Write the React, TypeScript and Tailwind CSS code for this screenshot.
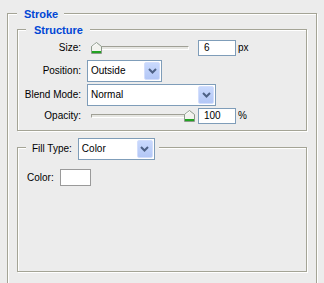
import React from "react";

const GRAY = "border-[#a4a496]";

function Chevron() {
  return (
    <svg width="9" height="6" viewBox="0 0 9 6">
      <polyline points="1,1 4.5,4.5 8,1" fill="none" stroke="#4d6185" strokeWidth="2" />
    </svg>
  );
}

function Select({ value, w }: { value: string; w: string }) {
  return (
    <div className={`flex h-[22px] items-stretch border border-[#7f9db9] bg-white ${w}`}>
      <span className="flex flex-1 items-center pl-[3px] text-[10px] text-black">{value}</span>
      <span className="m-[1px] flex w-[16px] items-center justify-center rounded-[2px] border border-[#d3defc] bg-gradient-to-b from-[#c9d9fd] to-[#b3c7f6]">
        <Chevron />
      </span>
    </div>
  );
}

function Input({ value }: { value: string }) {
  return (
    <div className="flex h-[16px] w-[38px] items-center border border-[#7f9db9] bg-white pl-[5px] text-[10px] text-black">
      {value}
    </div>
  );
}

function Thumb() {
  return (
    <svg width="11" height="12" viewBox="0 0 11 12">
      <path d="M0.5 11.5 V4.5 L5.5 0.5 L10.5 4.5 V11.5 Z" fill="#f3f3ef" stroke="#8c9a8a" />
      <rect x="1" y="9" width="9" height="2" fill="#22a322" />
      <path d="M1.5 4.8 L5.5 1.6" stroke="#ffffff" />
    </svg>
  );
}

function Slider({ pos }: { pos: "min" | "max" }) {
  return (
    <div className="relative h-[12px] w-[104px]">
      <div className="absolute left-0 top-[4px] h-[4px] w-[98px] border-t border-l border-[#a0a096] border-b border-b-white border-r border-r-white bg-[#e6e6e2]" />
      <div className={`absolute top-0 ${pos === "min" ? "left-0" : "left-[93px]"}`}>
        <Thumb />
      </div>
    </div>
  );
}

function Label({ children }: { children: React.ReactNode }) {
  return <div className="w-[63px] shrink-0 text-right text-[10px] text-black">{children}</div>;
}

export default function App() {
  return (
    <div className="h-[283px] w-[324px] overflow-hidden bg-[#ececec] pl-[7px] pt-[13px] font-['Liberation_Sans',Arial,sans-serif] leading-none">
      <div className={`relative h-[300px] w-[310px] border ${GRAY} px-[9px] pt-[15px] shadow-[inset_1px_1px_0_#fff,1px_1px_0_#fff]`}>
        <div className="absolute left-[9px] top-[-6px] bg-[#ececec] pl-[7px] pr-[6px] text-[11px] font-bold leading-[13px] text-[#0046d5]">
          Stroke
        </div>

        {/* Structure */}
        <div className={`relative w-[290px] border ${GRAY} pt-[10px] pb-[6px] shadow-[inset_1px_1px_0_#fff,1px_1px_0_#fff]`}>
          <div className="absolute left-[8px] top-[-6px] bg-[#ececec] pl-[8px] pr-[7px] text-[11px] font-bold leading-[13px] text-[#0046d5]">
            Structure
          </div>
          <div className="flex h-[16px] items-center">
            <Label>Size:</Label>
            <div className="ml-[10px]">
              <Slider pos="min" />
            </div>
            <div className="ml-[3px]">
              <Input value="6" />
            </div>
            <span className="ml-[2px] text-[10px] text-black">px</span>
          </div>
          <div className="mt-[4px] flex h-[22px] items-center">
            <Label>Position:</Label>
            <div className="ml-[6px]">
              <Select value="Outside" w="w-[75px]" />
            </div>
          </div>
          <div className="mt-[2px] flex h-[22px] items-center">
            <Label>Blend Mode:</Label>
            <div className="ml-[6px]">
              <Select value="Normal" w="w-[129px]" />
            </div>
          </div>
          <div className="mt-[2px] flex h-[16px] items-center">
            <Label>Opacity:</Label>
            <div className="ml-[10px]">
              <Slider pos="max" />
            </div>
            <div className="ml-[3px]">
              <Input value="100" />
            </div>
            <span className="ml-[2px] text-[10px] text-black">%</span>
          </div>
        </div>

        {/* Fill type */}
        <div className={`relative mt-[16px] h-[125px] w-[290px] border ${GRAY} pl-[9px] pt-[21px] shadow-[inset_1px_1px_0_#fff,1px_1px_0_#fff]`}>
          <div className="absolute left-[8px] top-[-10px] flex items-center bg-[#ececec] pl-[6px] pr-[4px]">
            <span className="text-[10px] text-black">Fill Type:</span>
            <div className="ml-[6px]">
              <Select value="Color" w="w-[77px]" />
            </div>
          </div>
          <div className="flex items-center">
            <span className="text-[10px] text-black">Color:</span>
            <div className="ml-[6px] h-[17px] w-[31px] border border-[#9a9a9a] bg-white" />
          </div>
        </div>
      </div>
    </div>
  );
}
